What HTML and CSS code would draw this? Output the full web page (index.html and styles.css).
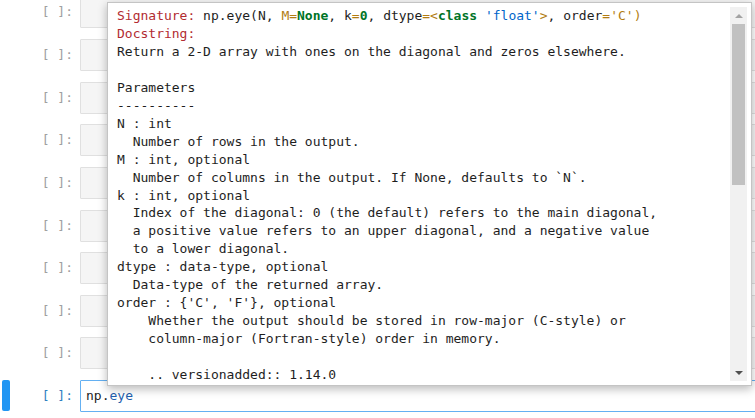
FILE: index.html
```html
<!DOCTYPE html>
<html>
<head>
<meta charset="utf-8">
<link rel="stylesheet" href="styles.css">
</head>
<body>
<div class="notebook">
  <div class="cell"><div class="collapser"></div><div class="prompt">[ ]:</div><div class="editor"></div></div>
  <div class="cell"><div class="collapser"></div><div class="prompt">[ ]:</div><div class="editor"></div></div>
  <div class="cell"><div class="collapser"></div><div class="prompt">[ ]:</div><div class="editor"></div></div>
  <div class="cell"><div class="collapser"></div><div class="prompt">[ ]:</div><div class="editor"></div></div>
  <div class="cell"><div class="collapser"></div><div class="prompt">[ ]:</div><div class="editor"></div></div>
  <div class="cell"><div class="collapser"></div><div class="prompt">[ ]:</div><div class="editor"></div></div>
  <div class="cell"><div class="collapser"></div><div class="prompt">[ ]:</div><div class="editor"></div></div>
  <div class="cell"><div class="collapser"></div><div class="prompt">[ ]:</div><div class="editor"></div></div>
  <div class="cell"><div class="collapser"></div><div class="prompt">[ ]:</div><div class="editor"></div></div>
  <div class="cell active"><div class="collapser"><div class="bar"></div></div><div class="prompt">[ ]:</div><div class="editor"><span class="code">np.<span class="prop">eye</span></span></div></div>
</div>

<div class="tooltip">
  <div class="doc"><pre><span class="r">Signature:</span> np.eye(N, <span class="y">M=</span><span class="g">None</span>, k<span class="y">=</span><span class="g">0</span>, dtype<span class="y">=&lt;</span><span class="g">class</span> <span class="b">'float'</span><span class="y">&gt;</span>, order<span class="y">='C')</span>
<span class="r">Docstring:</span>
Return a 2-D array with ones on the diagonal and zeros elsewhere.

Parameters
----------
N : int
  Number of rows in the output.
M : int, optional
  Number of columns in the output. If None, defaults to `N`.
k : int, optional
  Index of the diagonal: 0 (the default) refers to the main diagonal,
  a positive value refers to an upper diagonal, and a negative value
  to a lower diagonal.
dtype : data-type, optional
  Data-type of the returned array.
order : {'C', 'F'}, optional
    Whether the output should be stored in row-major (C-style) or
    column-major (Fortran-style) order in memory.

    .. versionadded:: 1.14.0
</pre></div>
  <div class="scrollbar">
    <div class="sb-btn"><span class="tri-up"></span></div>
    <div class="sb-track"><div class="sb-thumb"></div></div>
    <div class="sb-btn"><span class="tri-down"></span></div>
  </div>
</div>
</body>
</html>
```
FILE: styles.css
```css
html, body {
  margin: 0;
  padding: 0;
  background: #ffffff;
  overflow: hidden;
  width: 755px;
  height: 418px;
}

body {
  position: relative;
  font-family: "DejaVu Sans Mono", "Liberation Mono", monospace;
  font-size: 13px;
  color: #222222;
}

.notebook {
  margin-top: -8.9375px;
  width: 790px;
}

.cell {
  display: flex;
  align-items: center;
  padding: 5.3125px 0;
}

.collapser {
  width: 10px;
  height: 32px;
  padding-left: 2px;
  box-sizing: border-box;
}

.bar {
  width: 7.5px;
  height: 31px;
  background: #2196f3;
  border-radius: 2px;
}

.prompt {
  width: 70px;
  box-sizing: border-box;
  padding-right: 7px;
  text-align: right;
  color: #a0a0a0;
  line-height: 18px;
  white-space: pre;
}

.editor {
  flex: 1;
  height: 32px;
  box-sizing: border-box;
  border: 1px solid #e0e0e0;
  background: #f5f5f5;
  border-radius: 1px;
  display: flex;
  align-items: center;
  padding-left: 5px;
}

.active .prompt {
  color: #307fc1;
}

.active .editor {
  background: #ffffff;
  border-color: #64b0f2;
}

.code {
  color: #1e1e1e;
  line-height: 18px;
  white-space: pre;
}

.prop {
  color: #1f5fae;
}

.tooltip {
  position: absolute;
  left: 107px;
  top: 2px;
  width: 645px;
  height: 384px;
  box-sizing: border-box;
  border: 1px solid #c4c4c4;
  background: #ffffff;
  box-shadow: 0 3px 9px rgba(0, 0, 0, 0.28);
  padding: 4px;
  display: flex;
}

.doc {
  flex: 1;
  overflow: hidden;
  padding-left: 5px;
}

.doc pre {
  margin: 0;
  font-family: "DejaVu Sans Mono", "Liberation Mono", monospace;
  font-size: 13px;
  line-height: 17.95px;
  color: #1e1e1e;
}

.r { color: #b22b31; }
.y { color: #b27d12; }
.g { color: #007427; font-weight: bold; }
.b { color: #0065ca; }

.scrollbar {
  width: 17px;
  background: #f1f1f1;
  display: flex;
  flex-direction: column;
}

.sb-btn {
  height: 17px;
  display: flex;
  align-items: center;
  justify-content: center;
}

.sb-track {
  flex: 1;
  padding: 0 2px;
}

.sb-thumb {
  height: 161px;
  background: #c1c1c1;
}

.tri-up {
  width: 0;
  height: 0;
  border-left: 4px solid transparent;
  border-right: 4px solid transparent;
  border-bottom: 4px solid #a3a3a3;
}

.tri-down {
  width: 0;
  height: 0;
  border-left: 4px solid transparent;
  border-right: 4px solid transparent;
  border-top: 4px solid #505050;
}
```
